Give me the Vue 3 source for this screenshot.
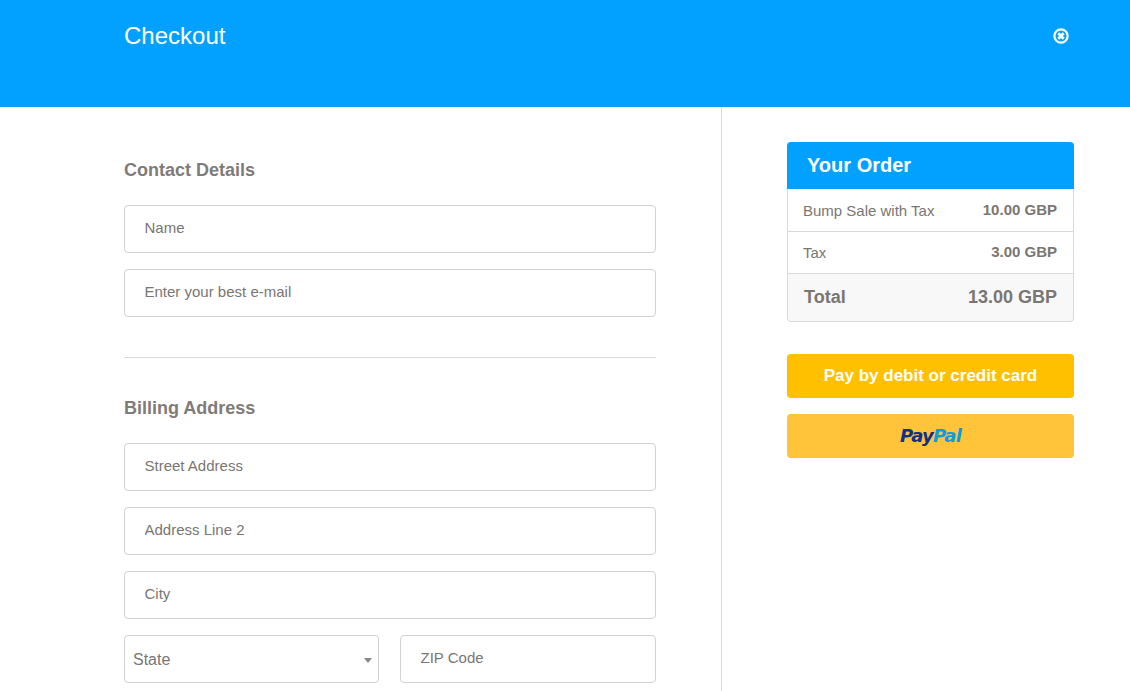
<script setup>
const topFields = ['Name', 'Enter your best e-mail']
const addressFields = ['Street Address', 'Address Line 2', 'City']
</script>

<template>
  <div class="page">
    <header class="top">
      <h1 class="title">Checkout</h1>
      <svg class="close" width="16" height="16" viewBox="0 0 16 16" aria-hidden="true">
        <circle cx="8" cy="8" r="6.6" fill="none" stroke="#fff" stroke-width="2.2" />
        <path d="M5.3 5.3l5.4 5.4M10.7 5.3l-5.4 5.4" stroke="#fff" stroke-width="2.8" />
      </svg>
    </header>
    <main class="body">
      <section class="left">
        <h2 class="heading first">Contact Details</h2>
        <div class="fields">
          <input v-for="f in topFields" :key="f" class="input" :placeholder="f" />
        </div>
        <hr class="rule" />
        <h2 class="heading">Billing Address</h2>
        <div class="fields">
          <input v-for="f in addressFields" :key="f" class="input" :placeholder="f" />
          <div class="pair">
            <div class="select-wrap">
              <select class="select"><option>State</option></select>
              <span class="caret"></span>
            </div>
            <input class="input" placeholder="ZIP Code" />
          </div>
        </div>
      </section>
      <aside class="right">
        <div class="order">
          <div class="order-head">Your Order</div>
          <div class="row row-tall"><span>Bump Sale with Tax</span><b>10.00 GBP</b></div>
          <div class="row"><span>Tax</span><b>3.00 GBP</b></div>
          <div class="row total"><span>Total</span><span>13.00 GBP</span></div>
        </div>
        <button class="btn card">Pay by debit or credit card</button>
        <button class="btn paypal"><span class="pp-dark">Pay</span><span class="pp-light">Pal</span></button>
      </aside>
    </main>
  </div>
</template>

<style>
html, body { margin: 0; overflow: hidden; height: 691px; background: #fff; }
</style>

<style scoped>
.page {
  font-family: "Liberation Sans", Arial, sans-serif;
  color: #7a7673;
  height: 691px;
  overflow: hidden;
}
.top {
  height: 107px;
  box-sizing: border-box;
  background: #03a1ff;
  display: flex;
  justify-content: space-between;
  align-items: flex-start;
  padding: 21px 60px 0 124px;
  color: #fff;
}
.title {
  margin: 0;
  font-size: 24px;
  font-weight: 400;
  line-height: 29px;
}
.close { margin-top: 7px; margin-right: 1px; }
.body {
  display: flex;
  align-items: stretch;
  height: 584px;
}
.left {
  width: 722px;
  box-sizing: border-box;
  border-right: 1px solid #d9d9d9;
  padding: 0 65px 0 124px;
}
.heading {
  margin: 39px 0 24px;
  font-size: 18px;
  line-height: 22px;
  font-weight: 700;
  color: #7f7b78;
  height: 22px;
}
.heading.first { margin-top: 52px; }
.fields {
  display: flex;
  flex-direction: column;
  gap: 16px;
}
.input {
  display: block;
  width: 100%;
  height: 48px;
  box-sizing: border-box;
  border: 1px solid #d2d2d2;
  border-radius: 4px;
  padding: 0 19.5px 4px;
  font: 15px "Liberation Sans", Arial, sans-serif;
  color: #7a7673;
  background: #fff;
  outline: none;
}
.input::placeholder { color: #7a7673; opacity: 1; }
.rule {
  margin: 40px 0 0;
  border: 0;
  border-top: 1px solid #d9d9d9;
}
.pair {
  display: grid;
  grid-template-columns: 255px 256px;
  column-gap: 21px;
}
.select-wrap { position: relative; }
.select {
  display: block;
  width: 100%;
  height: 48px;
  box-sizing: border-box;
  appearance: none;
  border: 1px solid #d2d2d2;
  border-radius: 4px;
  padding: 0 8px;
  background: #fff;
  font: 16px "Liberation Sans", Arial, sans-serif;
  color: #7a7673;
  outline: none;
}
.caret {
  position: absolute;
  right: 7px;
  top: 23px;
  border-left: 4px solid transparent;
  border-right: 4px solid transparent;
  border-top: 5px solid #888;
}
.right {
  width: 287px;
  margin-left: 65px;
  padding-top: 35px;
}
.order {
  border-radius: 4px;
  overflow: hidden;
}
.order-head {
  height: 47px;
  padding-left: 20px;
  background: #03a1ff;
  color: #fff;
  font-size: 20px;
  font-weight: 700;
  line-height: 47px;
}
.row {
  display: flex;
  justify-content: space-between;
  height: 42px;
  box-sizing: border-box;
  align-items: center;
  padding: 0 16px 0 15px;
  font-size: 15px;
  border: 1px solid #d9d9d9;
  border-top: 0;
}
.row-tall { height: 43px; }
.row b { font-size: 15px; position: relative; top: -1px; }
.total {
  height: 48px;
  background: #f8f8f8;
  font-size: 18px;
  font-weight: 700;
  padding-left: 16px;
  border-radius: 0 0 4px 4px;
}
.btn {
  display: flex;
  align-items: center;
  justify-content: center;
  width: 100%;
  height: 44px;
  border: 0;
  border-radius: 4px;
  color: #fff;
  font: 700 17px "Liberation Sans", Arial, sans-serif;
  padding: 0;
}
.card { background: #ffc000; margin-top: 32px; }
.paypal {
  background: #ffc439;
  margin-top: 16px;
  font-family: "DejaVu Sans", sans-serif;
  font-size: 18px;
  font-style: italic;
  letter-spacing: -0.75px;
  padding-bottom: 2px;
}
.pp-dark { color: #123087; }
.pp-light { color: #0d9ce0; }
</style>
